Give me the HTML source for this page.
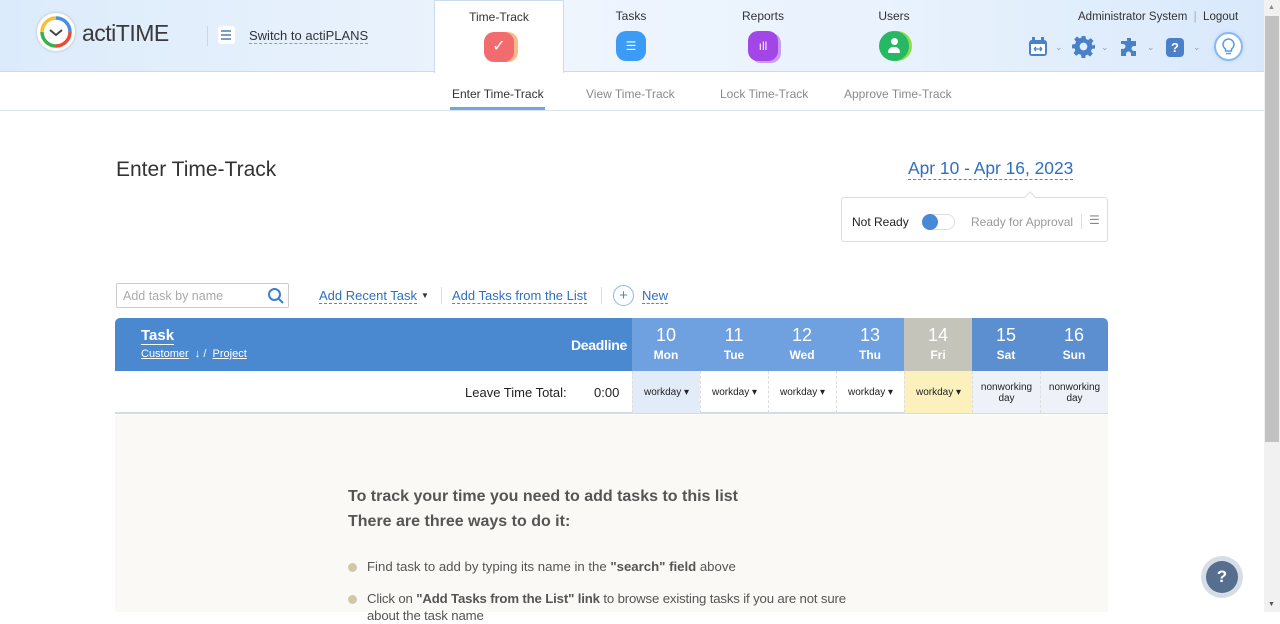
<!DOCTYPE html>
<html><head><meta charset="utf-8"><style>
*{box-sizing:border-box;margin:0;padding:0}
body{width:1280px;height:612px;overflow:hidden;font-family:"Liberation Sans",sans-serif;background:#fff;position:relative;color:#333}
.abs{position:absolute}
.hdr{left:0;top:0;width:1264px;height:72px;background:linear-gradient(90deg,#dcebfb,#eef5fd 45%,#e9f2fd 70%,#d9e9fb);border-bottom:1px solid #c9dbee}
.tab{top:0;height:72px;width:130px;text-align:center;font-size:12px;color:#333;padding-top:9px}
.tab .ic{width:30px;height:30px;margin:8px auto 0;border-radius:10px}
.sub{font-size:12px;color:#8a8a8a;top:87px}
.dl{border-bottom:1px dashed #4a88cf;color:#2f6fc0}
.day{top:318px;width:68px;height:53px;color:#fff;text-align:center;font-weight:bold}
.day b{display:block;font-size:18px;font-weight:normal;margin-top:7px}
.day span{font-size:12px}
.cell{top:371px;width:68px;height:42px;font-size:10px;text-align:center;border-left:1px dashed #ddd;color:#222}
.sb{left:1264px;top:0;width:16px;height:612px;background:#f1f1f1}
.chev{top:42px;font-size:9px;color:#8fa3b8}
</style></head><body>
<div class="abs hdr"></div>
<div class="abs" style="left:37px;top:13px;width:38px;height:38px;border-radius:50%;background:#fff;box-shadow:0 0 3px #bbb"></div>
<svg class="abs" style="left:37px;top:13px" width="38" height="38" viewBox="0 0 38 38"><circle cx="19" cy="19" r="14" fill="none" stroke="#f5c133" stroke-width="3.5" stroke-dasharray="22 66" transform="rotate(180 19 19)"/><circle cx="19" cy="19" r="14" fill="none" stroke="#4a90e2" stroke-width="3.5" stroke-dasharray="22 66" transform="rotate(270 19 19)"/><circle cx="19" cy="19" r="14" fill="none" stroke="#e74c3c" stroke-width="3.5" stroke-dasharray="22 66"/><circle cx="19" cy="19" r="14" fill="none" stroke="#3cb04a" stroke-width="3.5" stroke-dasharray="22 66" transform="rotate(90 19 19)"/><path d="M13 17l6 5 6-5" stroke="#444" stroke-width="2" fill="none"/></svg>
<div class="abs" style="left:82px;top:20px;font-size:23px;color:#3a3a3a;letter-spacing:-0.5px">actiTIME</div>
<div class="abs" style="left:207px;top:26px;width:1px;height:20px;background:#c8d6e6"></div>
<div class="abs" style="left:218px;top:26px;width:17px;height:18px;background:#fff;border-radius:3px"></div>
<div class="abs" style="left:221px;top:30px;width:10px;height:2px;background:#7a9cc5;box-shadow:0 4px 0 #7a9cc5,0 8px 0 #7a9cc5"></div>
<div class="abs" style="left:249px;top:28px;font-size:13px;color:#333;border-bottom:1px dashed #999">Switch to actiPLANS</div>
<div class="abs tab" style="left:434px;background:#fff;border:1px solid #c9dbee;border-bottom:none;height:73px">Time-Track<div class="ic" style="background:#f26b6f;box-shadow:4px 0 0 #fbb98a;color:#fff;font-size:16px;line-height:30px">✓</div></div>
<div class="abs tab" style="left:566px">Tasks<div class="ic" style="background:#3c9cf5;color:#fff;line-height:30px">☰</div></div>
<div class="abs tab" style="left:698px">Reports<div class="ic" style="background:#a346e8;box-shadow:3px 2px 0 #c99bf5;color:#fff;font-size:12px;line-height:30px">ıll</div></div>
<div class="abs tab" style="left:829px">Users<div class="ic" style="background:#27b866;border-radius:50%;box-shadow:3px 0 0 #8ddc4a;position:relative"><div style="position:absolute;left:12px;top:7px;width:7px;height:7px;border-radius:50%;background:#fff"></div><div style="position:absolute;left:9px;top:16px;width:12px;height:6px;border-radius:5px 5px 1px 1px;background:#fff"></div></div></div>
<div class="abs" style="left:1078px;top:11px;font-size:11.5px;color:#333">Administrator System &nbsp;<span style="color:#aaa">|</span>&nbsp; Logout</div>
<svg class="abs" style="left:1027px;top:36px" width="22" height="22"><rect x="2" y="4" width="18" height="16" rx="3" fill="#4a80c8"/><rect x="4" y="8" width="14" height="10" fill="#fff"/><rect x="5" y="1" width="3" height="5" fill="#4a80c8"/><rect x="14" y="1" width="3" height="5" fill="#4a80c8"/><path d="M7 13h8M7 13l2-2M7 13l2 2M15 13l-2-2M15 13l-2 2" stroke="#4a80c8" stroke-width="1.3" fill="none"/></svg>
<div class="abs chev" style="left:1055px">⌄</div>
<svg class="abs" style="left:1072px;top:35px" width="23" height="23" viewBox="0 0 24 24"><path fill="#4a80c8" d="M10 1h4l.6 3.2 2.3 1 2.7-1.9 2.8 2.8-1.9 2.7 1 2.3L24 10v4l-3.2.6-1 2.3 1.9 2.7-2.8 2.8-2.7-1.9-2.3 1L14 24h-4l-.6-3.2-2.300-1-2.7 1.9-2.8-2.8 1.9-2.7-1-2.3L0 14v-4l3.2-.6 1-2.3-1.9-2.7 2.8-2.8 2.7 1.9 2.3-1z"/><circle cx="12" cy="12" r="4" fill="#dfeefc"/></svg>
<div class="abs chev" style="left:1101px">⌄</div>
<svg class="abs" style="left:1119px;top:36px" width="22" height="22" viewBox="0 0 22 22"><path fill="#4a80c8" d="M8 2h4v3a2 2 0 1 1 0 0h5v5h-2a2.5 2.5 0 1 0 0 5h2v5h-5v-2a2.5 2.5 0 1 0-5 0v2H2v-7h2a2.5 2.5 0 1 0 0-5H2V5h6z"/></svg>
<div class="abs chev" style="left:1147px">⌄</div>
<div class="abs" style="left:1166px;top:38px;width:18px;height:19px;background:#4a80c8;border-radius:4px;color:#fff;font-size:13px;font-weight:bold;text-align:center;line-height:19px">?</div>
<div class="abs chev" style="left:1193px">⌄</div>
<div class="abs" style="left:1214px;top:32px;width:29px;height:29px;border-radius:50%;border:2px solid #8ab7ef;background:#fff;box-shadow:0 0 4px #bcd6f5"></div>
<svg class="abs" style="left:1219px;top:37px" width="19" height="19" viewBox="0 0 19 19"><path d="M6.5 12c-1.5-1.2-2.5-2.6-2.5-4.5a5.5 5.5 0 0 1 11 0c0 1.9-1 3.3-2.5 4.5v2h-6z" fill="none" stroke="#5b9ae6" stroke-width="1.5"/><path d="M7 16.5h5" stroke="#5b9ae6" stroke-width="1.5"/></svg>
<div class="abs" style="left:0;top:110px;width:1264px;height:1px;background:#dde3ea"></div>
<div class="abs sub" style="left:452px;color:#333">Enter Time-Track</div>
<div class="abs" style="left:450px;top:107px;width:95px;height:3px;background:#6ea6e6"></div>
<div class="abs sub" style="left:586px">View Time-Track</div>
<div class="abs sub" style="left:720px">Lock Time-Track</div>
<div class="abs sub" style="left:844px">Approve Time-Track</div>
<div class="abs" style="left:116px;top:158px;font-size:21px;color:#333">Enter Time-Track</div>
<div class="abs dl" style="left:908px;top:158px;font-size:17.4px">Apr 10 - Apr 16, 2023</div>
<div class="abs" style="left:841px;top:197px;width:267px;height:45px;border:1px solid #ddd;border-radius:3px;background:#fff"></div>
<div class="abs" style="left:1026px;top:193px;width:8px;height:8px;background:#fff;border-left:1px solid #ddd;border-top:1px solid #ddd;transform:rotate(45deg)"></div>
<div class="abs" style="left:852px;top:215px;font-size:12px;color:#222">Not Ready</div>
<div class="abs" style="left:922px;top:214px;width:33px;height:16px;border:1px solid #ddd;border-radius:8px"></div>
<div class="abs" style="left:922px;top:214px;width:16px;height:16px;border-radius:50%;background:#4a88d8"></div>
<div class="abs" style="left:971px;top:215px;font-size:12px;color:#999">Ready for Approval</div>
<div class="abs" style="left:1081px;top:214px;width:1px;height:15px;background:#ddd"></div>
<div class="abs" style="left:1089px;top:213px;font-size:12px;color:#888">☰</div>
<div class="abs" style="left:116px;top:283px;width:173px;height:25px;border:1px solid #ccc;border-radius:2px;font-size:12.5px;color:#aaa;padding:5px 6px">Add task by name</div>
<svg class="abs" style="left:267px;top:287px" width="18" height="18"><circle cx="7.5" cy="7.5" r="5.5" fill="none" stroke="#3a7fd0" stroke-width="2"/><path d="M12 12l4 4" stroke="#3a7fd0" stroke-width="2"/></svg>
<div class="abs dl" style="left:319px;top:288px;font-size:13px">Add Recent Task</div><div class="abs" style="left:421px;top:291px;font-size:8px">▼</div>
<div class="abs" style="left:441px;top:287px;width:1px;height:17px;background:#ddd"></div>
<div class="abs dl" style="left:452px;top:288px;font-size:13px">Add Tasks from the List</div>
<div class="abs" style="left:601px;top:287px;width:1px;height:17px;background:#ddd"></div>
<div class="abs" style="left:613px;top:285px;width:21px;height:21px;border:1px solid #8ab7ef;border-radius:50%;color:#4a88cf;text-align:center;line-height:19px;font-size:15px">+</div>
<div class="abs dl" style="left:642px;top:288px;font-size:13px">New</div>
<div class="abs" style="left:115px;top:318px;width:517px;height:53px;background:#4a88cf;border-radius:5px 0 0 0"></div>
<div class="abs" style="left:141px;top:327px;font-size:15px;color:#fff;font-weight:bold;border-bottom:1px solid #fff">Task</div>
<div class="abs" style="left:141px;top:348px;font-size:11px;color:#fff"><u>Customer</u> &nbsp;↓ / &nbsp;<u>Project</u></div>
<div class="abs" style="left:571px;top:337px;font-size:14px;color:#fff;font-weight:bold;letter-spacing:-0.3px">Deadline</div>
<div class="abs day" style="left:632px;background:#6fa0df"><b>10</b><span>Mon</span></div>
<div class="abs day" style="left:700px;background:#6fa0df"><b>11</b><span>Tue</span></div>
<div class="abs day" style="left:768px;background:#6fa0df"><b>12</b><span>Wed</span></div>
<div class="abs day" style="left:836px;background:#6fa0df"><b>13</b><span>Thu</span></div>
<div class="abs day" style="left:904px;background:#c4c4bb"><b>14</b><span>Fri</span></div>
<div class="abs day" style="left:972px;background:#5b8fcf"><b>15</b><span>Sat</span></div>
<div class="abs day" style="left:1040px;background:#5b8fcf;border-radius:0 5px 0 0"><b>16</b><span>Sun</span></div>
<div class="abs" style="left:115px;top:371px;width:993px;height:43px;background:#fff;border-bottom:2px solid #d3dbe4"></div>
<div class="abs" style="left:465px;top:385px;font-size:13px;color:#222">Leave Time Total:</div>
<div class="abs" style="left:594px;top:385px;font-size:13px;color:#222">0:00</div>
<div class="abs cell" style="left:632px;background:#e1ecf8;padding-top:16px">workday ▾</div>
<div class="abs cell" style="left:700px;padding-top:16px">workday ▾</div>
<div class="abs cell" style="left:768px;padding-top:16px">workday ▾</div>
<div class="abs cell" style="left:836px;padding-top:16px">workday ▾</div>
<div class="abs cell" style="left:904px;background:#fcf0bd;padding-top:16px">workday ▾</div>
<div class="abs cell" style="left:972px;background:#eef2f8;padding-top:11px">nonworking<br>day</div>
<div class="abs cell" style="left:1040px;background:#eef2f8;padding-top:11px">nonworking<br>day</div>
<div class="abs" style="left:115px;top:415px;width:993px;height:197px;background:#faf9f6"></div>
<div class="abs" style="left:348px;top:484px;font-size:16px;font-weight:bold;color:#555;line-height:25px">To track your time you need to add tasks to this list<br>There are three ways to do it:</div>
<div class="abs" style="left:348px;top:563px;width:9px;height:9px;border-radius:50%;background:#cfc9a8"></div>
<div class="abs" style="left:367px;top:559px;font-size:13.2px;color:#555">Find task to add by typing its name in the <b>"search" field</b> above</div>
<div class="abs" style="left:348px;top:595px;width:9px;height:9px;border-radius:50%;background:#cfc9a8"></div>
<div class="abs" style="left:367px;top:590px;font-size:13.2px;color:#555;width:505px;line-height:17px;letter-spacing:-0.15px">Click on <b>"Add Tasks from the List" link</b> to browse existing tasks if you are not sure about the task name</div>
<div class="abs" style="left:1201px;top:556px;width:42px;height:42px;border-radius:50%;background:#d7dde5"></div>
<div class="abs" style="left:1206px;top:561px;width:32px;height:32px;border-radius:50%;background:#566f8e;color:#fff;font-weight:bold;font-size:17px;text-align:center;line-height:32px">?</div>
<div class="abs sb"></div>
<div class="abs" style="left:1265px;top:16px;width:14px;height:426px;background:#c1c1c1"></div>
<div class="abs" style="left:1268px;top:4px;font-size:7px;color:#888">▲</div>
<div class="abs" style="left:1268px;top:601px;font-size:7px;color:#555">▼</div>
</body></html>
